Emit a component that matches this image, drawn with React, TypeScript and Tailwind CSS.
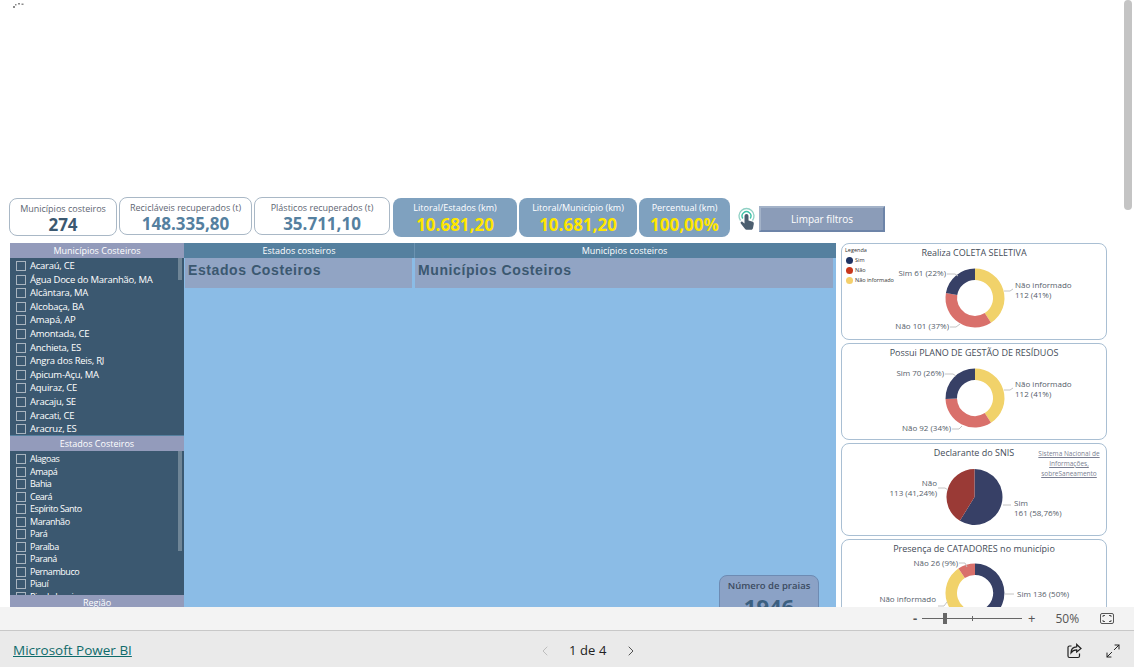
import React from 'react';
import { ChevronLeft, ChevronRight, Maximize2 } from 'lucide-react';

const municipios = [
  'Acaraú, CE', 'Água Doce do Maranhão, MA', 'Alcântara, MA', 'Alcobaça, BA', 'Amapá, AP', 'Amontada, CE',
  'Anchieta, ES', 'Angra dos Reis, RJ', 'Apicum-Açu, MA', 'Aquiraz, CE', 'Aracaju, SE', 'Aracati, CE', 'Aracruz, ES',
];
const estados = [
  'Alagoas', 'Amapá', 'Bahia', 'Ceará', 'Espírito Santo', 'Maranhão', 'Pará', 'Paraíba', 'Paraná', 'Pernambuco', 'Piauí', 'Rio de Janeiro',
];

const NAVY = '#374066';
const YELLOW = '#f1d26a';
const SALMON = '#d9706b';
const BRICK = '#9a3a36';

type Seg = { value: number; color: string };
type Label = { lines: string[]; x: number; y: number; anchor?: 'start' | 'end'; line: string };

function arc(cx: number, cy: number, r: number, r0: number, a0: number, a1: number) {
  const p = (rad: number, a: number) => `${(cx + rad * Math.sin(a)).toFixed(2)} ${(cy - rad * Math.cos(a)).toFixed(2)}`;
  const large = a1 - a0 > Math.PI ? 1 : 0;
  if (r0 === 0) return `M${cx} ${cy}L${p(r, a0)}A${r} ${r} 0 ${large} 1 ${p(r, a1)}Z`;
  return `M${p(r, a0)}A${r} ${r} 0 ${large} 1 ${p(r, a1)}L${p(r0, a1)}A${r0} ${r0} 0 ${large} 0 ${p(r0, a0)}Z`;
}

function Chart({ cx, cy, r, r0, segs, labels, height }: { cx: number; cy: number; r: number; r0: number; segs: Seg[]; labels: Label[]; height: number }) {
  const total = segs.reduce((s, x) => s + x.value, 0);
  let a = 0;
  return (
    <svg width="266" height={height} className="absolute left-0 top-0" fontFamily="'Open Sans', sans-serif" fontSize="8" fill="#565e6a">
      {segs.map((s, i) => {
        const a0 = a;
        a += (s.value / total) * Math.PI * 2;
        return <path key={i} d={arc(cx, cy, r, r0, a0, a)} fill={s.color} />;
      })}
      {labels.map((l, i) => (
        <g key={i}>
          <path d={l.line} fill="none" stroke="#c4c4c4" strokeWidth="1" />
          {l.lines.map((t, j) => (
            <text key={j} x={l.x} y={l.y + j * 10} textAnchor={l.anchor ?? 'start'}>{t}</text>
          ))}
        </g>
      ))}
    </svg>
  );
}

function SlicerList({ items, rowClass, textClass, scrollH }: { items: string[]; rowClass: string; textClass: string; scrollH: string }) {
  return (
    <div className="relative flex-1 overflow-hidden bg-[#3b5870]">
      <div className={`flex flex-col pl-[6px] pt-[2px] ${rowClass}`}>
        {items.map((item) => (
          <div key={item} className={`flex h-[12px] shrink-0 items-center gap-[4px] leading-[12px] text-white ${textClass}`}>
            <span className="size-[10px] shrink-0 border border-[#a8b4bf]" />
            <span className="whitespace-nowrap">{item}</span>
          </div>
        ))}
      </div>
      <div className={`absolute right-[2px] top-0 w-[4px] bg-[#6f8596] ${scrollH}`} />
    </div>
  );
}

function SlicerHeader({ title }: { title: string }) {
  return <div className="flex h-[15px] shrink-0 items-center justify-center bg-[#939bbb] text-[9px] text-white">{title}</div>;
}

function WhiteKpi({ label, value, width, valueColor }: { label: string; value: string; width: string; valueColor: string }) {
  return (
    <div className={`flex h-[38px] ${width} flex-col items-center rounded-[8px] border border-[#a9b8c6] bg-white pt-[4px]`}>
      <span className="text-[9px] leading-[12px] text-[#5e6672]">{label}</span>
      <span className={`text-[17px] font-bold leading-[20px] ${valueColor}`}>{value}</span>
    </div>
  );
}

function BlueKpi({ label, value, width }: { label: string; value: string; width: string }) {
  return (
    <div className={`flex h-[39px] ${width} flex-col items-center rounded-[8px] bg-[#7fa1bf] pt-[4px]`}>
      <span className="text-[9px] leading-[12px] text-white">{label}</span>
      <span className="text-[17px] font-bold leading-[21px] text-[#ffe600]">{value}</span>
    </div>
  );
}

function ChartCard({ title, height, children }: { title: string; height: string; children?: React.ReactNode }) {
  return (
    <div className={`relative ${height} w-[266px] shrink-0 overflow-hidden rounded-[8px] border border-[#a9bfd3] bg-white`}>
      <div className="relative z-10 pt-[2px] text-center text-[9px] leading-[13px] text-[#444c58]">{title}</div>
      {children}
    </div>
  );
}

export default function App() {
  return (
    <div className="flex h-[667px] w-[1134px] flex-col overflow-hidden bg-white font-['Open_Sans',sans-serif]">
      <div className="relative flex h-[607px] shrink-0 overflow-hidden">
        <div className="flex w-[1124px] flex-col pl-[9px]">
          {/* loading dots */}
          <div className="h-[198px] shrink-0 pl-[4px] pt-[2px]">
            <svg width="12" height="7" fill="#8a8a8a">
              <rect x="0" y="4" width="2" height="2" />
              <rect x="2" y="2" width="1.5" height="1.5" />
              <rect x="5" y="1" width="2" height="1.5" />
              <rect x="8.5" y="1.5" width="2" height="1.5" />
            </svg>
          </div>

          <div className="flex h-[45px] shrink-0 items-start">
            <WhiteKpi label="Municípios costeiros" value="274" width="w-[108px]" valueColor="text-[#3b5870]" />
            <div className="-mt-[1px] ml-[2px]">
              <WhiteKpi label="Recicláveis recuperados (t)" value="148.335,80" width="w-[133px]" valueColor="text-[#55809f]" />
            </div>
            <div className="-mt-[1px] ml-[2px]">
              <WhiteKpi label="Plásticos recuperados (t)" value="35.711,10" width="w-[136px]" valueColor="text-[#55809f]" />
            </div>
            <div className="ml-[3px] flex gap-[2px]">
              <BlueKpi label="Litoral/Estados (km)" value="10.681,20" width="w-[124px]" />
              <BlueKpi label="Litoral/Município (km)" value="10.681,20" width="w-[118px]" />
              <BlueKpi label="Percentual (km)" value="100,00%" width="w-[91px]" />
            </div>
            <svg width="18" height="24" viewBox="0 0 18 24" className="ml-[8px] mt-[9px] shrink-0">
              <path d="M2.500 13.500a7.500 7.500 0 1 1 12 0" fill="none" stroke="#8fd0c4" strokeWidth="1.300" />
              <path d="M4.800 11.500a4.400 4.400 0 1 1 7.400 0" fill="none" stroke="#3fc2a8" strokeWidth="1.400" />
              <path d="M6.500 9a2 2 0 0 1 4 0V13.500l3.500 1c1.200.3 2 1.200 1.800 2.400l-.8 4c-.2 1-.9 1.800-1.900 1.800H8.500c-.6 0-1.200-.3-1.600-.9L2.800 16.500c-.7-1.200.7-2.500 1.800-1.600L6.500 16.500z" fill="#4c5f70" />
            </svg>
            <button className="ml-[3px] mt-[8px] h-[26px] w-[126px] shrink-0 border-2 border-[#6d84a8] border-l-[#a3b2c8] border-t-[#a3b2c8] bg-[#8b9cb8] text-[10px] font-medium text-white">
              Limpar filtros
            </button>
          </div>

          <div className="flex min-h-0 flex-1 items-start">
            <div className="ml-[1px] flex h-[364px] w-[174px] shrink-0 flex-col">
              <SlicerHeader title="Municípios Costeiros" />
              <div className="flex h-[177px] shrink-0">
                <SlicerList items={municipios} rowClass="gap-[1.6px]" textClass="text-[9.5px] tracking-[-0.25px]" scrollH="h-[22px]" />
              </div>
              <div className="h-[1px] shrink-0 bg-[#55809f]" />
              <SlicerHeader title="Estados Costeiros" />
              <div className="flex h-[144px] shrink-0">
                <SlicerList items={estados} rowClass="gap-[0.5px]" textClass="text-[9px] tracking-[-0.45px]" scrollH="h-[100px]" />
              </div>
              <SlicerHeader title="Região" />
            </div>

            <div className="relative flex h-[364px] w-[652px] shrink-0 flex-col bg-[#8bbce6]">
              <div className="flex h-[15px] shrink-0 bg-[#55809f] text-[9px] text-white">
                <div className="flex w-[231px] items-center justify-center border-r border-[#6b93b1]">Estados costeiros</div>
                <div className="flex w-[419px] items-center justify-center">Municípios costeiros</div>
              </div>
              <div className="flex h-[30px] shrink-0 gap-[3px] pl-[1px] font-['Liberation_Sans',sans-serif] text-[14px] font-bold tracking-[0.6px] text-[#3b5870]">
                <div className="w-[227px] bg-[#91a4c4] pl-[3px] pt-[2px]">Estados Costeiros</div>
                <div className="w-[418px] bg-[#91a4c4] pl-[3px] pt-[2px]">Municípios Costeiros</div>
              </div>
              <div className="absolute left-[535px] top-[332px] flex h-[60px] w-[100px] flex-col items-center rounded-[8px] border border-[#6d8bb3] bg-[#8ba2c6] pt-[3px]">
                <span className="text-[9.5px] font-semibold leading-[14px] text-[#3b4b60]">Número de praias</span>
                <span className="text-[22px] font-bold leading-[26px] text-[#3b5f80]">1946</span>
              </div>
            </div>

            <div className="ml-[5px] flex h-[364px] flex-col gap-[3px] overflow-hidden">
              <ChartCard title="Realiza COLETA SELETIVA" height="h-[97px]">
                <div className="absolute left-[3px] top-[2px] z-10 flex flex-col gap-[1px] text-[5.5px] leading-[9px] text-[#333]">
                  <span>Legenda</span>
                  <span className="flex items-center gap-[2px]"><i className="ml-[1px] size-[7px] rounded-full bg-[#1f3464]" />Sim</span>
                  <span className="flex items-center gap-[2px]"><i className="ml-[1px] size-[7px] rounded-full bg-[#c8381c]" />Não</span>
                  <span className="flex items-center gap-[2px]"><i className="ml-[1px] size-[7px] rounded-full bg-[#f4cf6b]" />Não informado</span>
                </div>
                <Chart
                  height={97}
                  cx={133}
                  cy={54}
                  r={29.5}
                  r0={18}
                  segs={[
                    { value: 112, color: YELLOW },
                    { value: 101, color: SALMON },
                    { value: 61, color: NAVY },
                  ]}
                  labels={[
                    { lines: ['Sim 61 (22%)'], x: 104, y: 32, anchor: 'end', line: 'M105 30H113L116 32' },
                    { lines: ['Não informado', '112 (41%)'], x: 173, y: 44, line: 'M162 47H168L171 45' },
                    { lines: ['Não 101 (37%)'], x: 107, y: 85, anchor: 'end', line: 'M108 83H114L118 80' },
                  ]}
                />
              </ChartCard>
              <ChartCard title="Possui PLANO DE GESTÃO DE RESÍDUOS" height="h-[97px]">
                <Chart
                  height={97}
                  cx={133}
                  cy={54}
                  r={29.5}
                  r0={18}
                  segs={[
                    { value: 112, color: YELLOW },
                    { value: 92, color: SALMON },
                    { value: 70, color: NAVY },
                  ]}
                  labels={[
                    { lines: ['Sim 70 (26%)'], x: 102, y: 32, anchor: 'end', line: 'M103 30H111L114 32' },
                    { lines: ['Não informado', '112 (41%)'], x: 173, y: 43, line: 'M162 46H168L171 44' },
                    { lines: ['Não 92 (34%)'], x: 109, y: 87, anchor: 'end', line: 'M110 85H117L120 82' },
                  ]}
                />
              </ChartCard>
              <ChartCard title="Declarante do SNIS" height="h-[93px]">
                <div className="absolute right-[5px] top-[5px] z-10 w-[64px] text-center text-[6.5px] leading-[10px] text-[#7b7f92] underline">
                  Sistema Nacional de Informações, sobreSaneamento
                </div>
                <Chart
                  height={93}
                  cx={132.5}
                  cy={53}
                  r={28}
                  r0={0}
                  segs={[
                    { value: 161, color: NAVY },
                    { value: 113, color: BRICK },
                  ]}
                  labels={[
                    { lines: ['Não', '113 (41,24%)'], x: 95, y: 42, anchor: 'end', line: 'M96 44H103L106 46' },
                    { lines: ['Sim', '161 (58,76%)'], x: 172, y: 62, line: 'M161 61H169' },
                  ]}
                />
              </ChartCard>
              <ChartCard title="Presença de CATADORES no município" height="h-[97px]">
                <Chart
                  height={97}
                  cx={133}
                  cy={53}
                  r={29.5}
                  r0={18}
                  segs={[
                    { value: 136, color: NAVY },
                    { value: 112, color: YELLOW },
                    { value: 26, color: SALMON },
                  ]}
                  labels={[
                    { lines: ['Não 26 (9%)'], x: 116, y: 26, anchor: 'end', line: 'M117 23H123L125 27' },
                    { lines: ['Sim 136 (50%)'], x: 175, y: 57, line: 'M163 54H172' },
                    { lines: ['Não informado'], x: 94, y: 62, anchor: 'end', line: 'M96 66H102L105 62' },
                  ]}
                />
              </ChartCard>
            </div>
          </div>
        </div>

        {/* page scrollbar */}
        <div className="h-full w-[10px] bg-white">
          <div className="h-[210px] w-[8px] rounded-[4px] bg-[#c4c4c4]" />
        </div>
      </div>

      <div className="flex h-[24px] shrink-0 items-center border-b border-[#c8c8c8] bg-[#f3f3f3] text-[#555]">
        <div className="ml-[913px] flex items-center">
          <span className="w-[6px] text-[13px] font-bold leading-none">-</span>
          <div className="relative ml-[3px] h-[1px] w-[100px] bg-[#666]">
            <span className="absolute left-[21px] top-[-5px] h-[11px] w-[4px] bg-[#666]" />
            <span className="absolute left-[50px] top-[-2px] h-[5px] w-[1px] bg-[#666]" />
          </div>
          <span className="ml-[6px] text-[13px] leading-none">+</span>
          <span className="ml-[20px] text-[12px] leading-none">50%</span>
          <svg width="14" height="11" viewBox="0 0 14 11" fill="none" stroke="#555" className="ml-[21px]">
            <rect x="0.5" y="0.5" width="13" height="10" rx="1.5" />
            <path d="M3 4V2.5H5M9 2.5H11V4M11 7V8.5H9M5 8.5H3V7" />
          </svg>
        </div>
      </div>

      <div className="flex h-[36px] shrink-0 items-center bg-[#eaeaea] pt-[3px]">
        <a className="ml-[13px] w-[524px] text-[13.5px] text-[#0f6b6b] underline">Microsoft Power BI</a>
        <ChevronLeft size={16} className="text-[#b5b5b5]" strokeWidth={1.25} />
        <span className="ml-[16px] w-[54px] text-[13px] font-medium tracking-[0.1px] text-[#222]">1 de 4</span>
        <ChevronRight size={16} className="text-[#333]" strokeWidth={1.25} />
        <svg width="16" height="16" viewBox="0 0 16 16" fill="none" stroke="#222" strokeWidth="1.2" className="ml-[427px]">
          <path d="M5.500 3H3.500A1.500 1.500 0 0 0 2 4.500v8.500A1.500 1.500 0 0 0 3.500 14.500h8.500a1.500 1.500 0 0 0 1.500-1.500V10.500" />
          <path d="M15 5.500 10.700 1.500v2.300c-3.700.2-5.700 2.700-5.700 6 1.500-2.300 3.300-3 5.700-3v2.200z" />
        </svg>
        <Maximize2 size={16} className="ml-[23px] text-[#222]" strokeWidth={1.5} />
      </div>
    </div>
  );
}
